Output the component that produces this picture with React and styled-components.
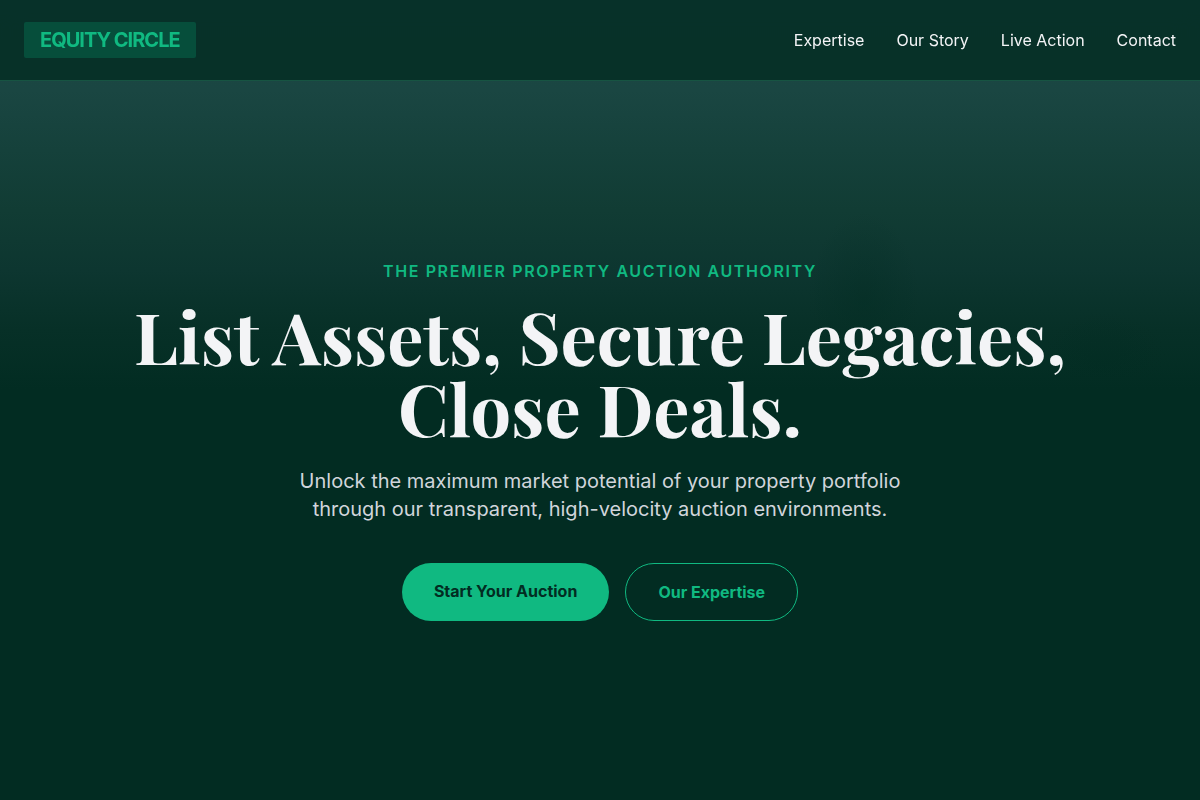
import styled, { createGlobalStyle } from "styled-components";

const GlobalStyle = createGlobalStyle`
  * {
    box-sizing: border-box;
  }

  body {
    margin: 0;
    background: #022c22;
    color: #f3f4f6;
    font-family: Inter, "Liberation Sans", sans-serif;
    font-size: 16px;
    line-height: 24px;
  }
`;

const Header = styled.header`
  position: fixed;
  top: 0;
  left: 0;
  right: 0;
  z-index: 10;
  display: flex;
  align-items: center;
  justify-content: space-between;
  padding: 22px 24px;
  background: rgba(2, 44, 34, 0.8);
  border-bottom: 1px solid #175442;
  backdrop-filter: blur(12px);
`;

const Logo = styled.a`
  padding: 4px 16px;
  border-radius: 2px;
  background: #064e3b;
  color: #10b981;
  font-size: 20px;
  font-weight: 700;
  line-height: 28px;
  letter-spacing: -0.05em;
  text-decoration: none;
`;

const Nav = styled.nav`
  display: flex;
  gap: 32px;
`;

const NavLink = styled.a`
  color: #f3f4f6;
  text-decoration: none;

  &:hover {
    color: #10b981;
  }
`;

const Hero = styled.section`
  display: flex;
  align-items: center;
  justify-content: center;
  min-height: 100vh;
  padding: 80px 24px 0;
  text-align: center;
  background:
    radial-gradient(ellipse 56px 88px at 72% 300px, rgba(2, 44, 34, 0.4), transparent),
    radial-gradient(ellipse 64px 48px at 92% 360px, rgba(2, 44, 34, 0.4), transparent),
    linear-gradient(
      180deg,
      #1d4846 0,
      #1a4642 90px,
      #15413b 150px,
      #113c34 210px,
      #0d3630 270px,
      #073027 330px,
      #022c22 390px
    );
`;

const HeroContent = styled.div`
  max-width: 1024px;
`;

const Eyebrow = styled.p`
  margin: 0 0 16px;
  color: #10b981;
  font-weight: 600;
  letter-spacing: 0.1em;
  text-transform: uppercase;
`;

const Title = styled.h1`
  margin: 0 0 24px;
  font-family: "Playfair Display", "Liberation Serif", serif;
  font-size: 72px;
  font-weight: 700;
  line-height: 72px;
`;

const Lead = styled.p`
  max-width: 672px;
  margin: 0 auto 40px;
  color: #d1d5db;
  font-size: 20px;
  line-height: 28px;
`;

const Actions = styled.div`
  display: flex;
  flex-wrap: wrap;
  justify-content: center;
  gap: 16px;
`;

const Button = styled.a`
  padding: 16px 32px;
  border: ${({ $outline }) => ($outline ? "1px solid #10b981" : "none")};
  border-radius: 32px;
  background: ${({ $outline }) => ($outline ? "transparent" : "#10b981")};
  color: ${({ $outline }) => ($outline ? "#10b981" : "#022c22")};
  font-weight: 700;
  text-decoration: none;
`;

const links = [
  { label: "Expertise", href: "#expertise" },
  { label: "Our Story", href: "#story" },
  { label: "Live Action", href: "#live" },
  { label: "Contact", href: "#contact" },
];

const App = () => {
  return (
    <>
      <GlobalStyle />
      <Header>
        <Logo href="#home">EQUITY CIRCLE</Logo>
        <Nav>
          {links.map((link) => (
            <NavLink key={link.href} href={link.href}>
              {link.label}
            </NavLink>
          ))}
        </Nav>
      </Header>

      <main>
        <Hero id="home">
          <HeroContent>
            <Eyebrow>The Premier Property Auction Authority</Eyebrow>
            <Title>List Assets, Secure Legacies, Close Deals.</Title>
            <Lead>
              Unlock the maximum market potential of your property portfolio
              through our transparent, high-velocity auction environments.
            </Lead>
            <Actions>
              <Button href="#contact">Start Your Auction</Button>
              <Button href="#expertise" $outline>
                Our Expertise
              </Button>
            </Actions>
          </HeroContent>
        </Hero>
      </main>
    </>
  );
};

export default App;
